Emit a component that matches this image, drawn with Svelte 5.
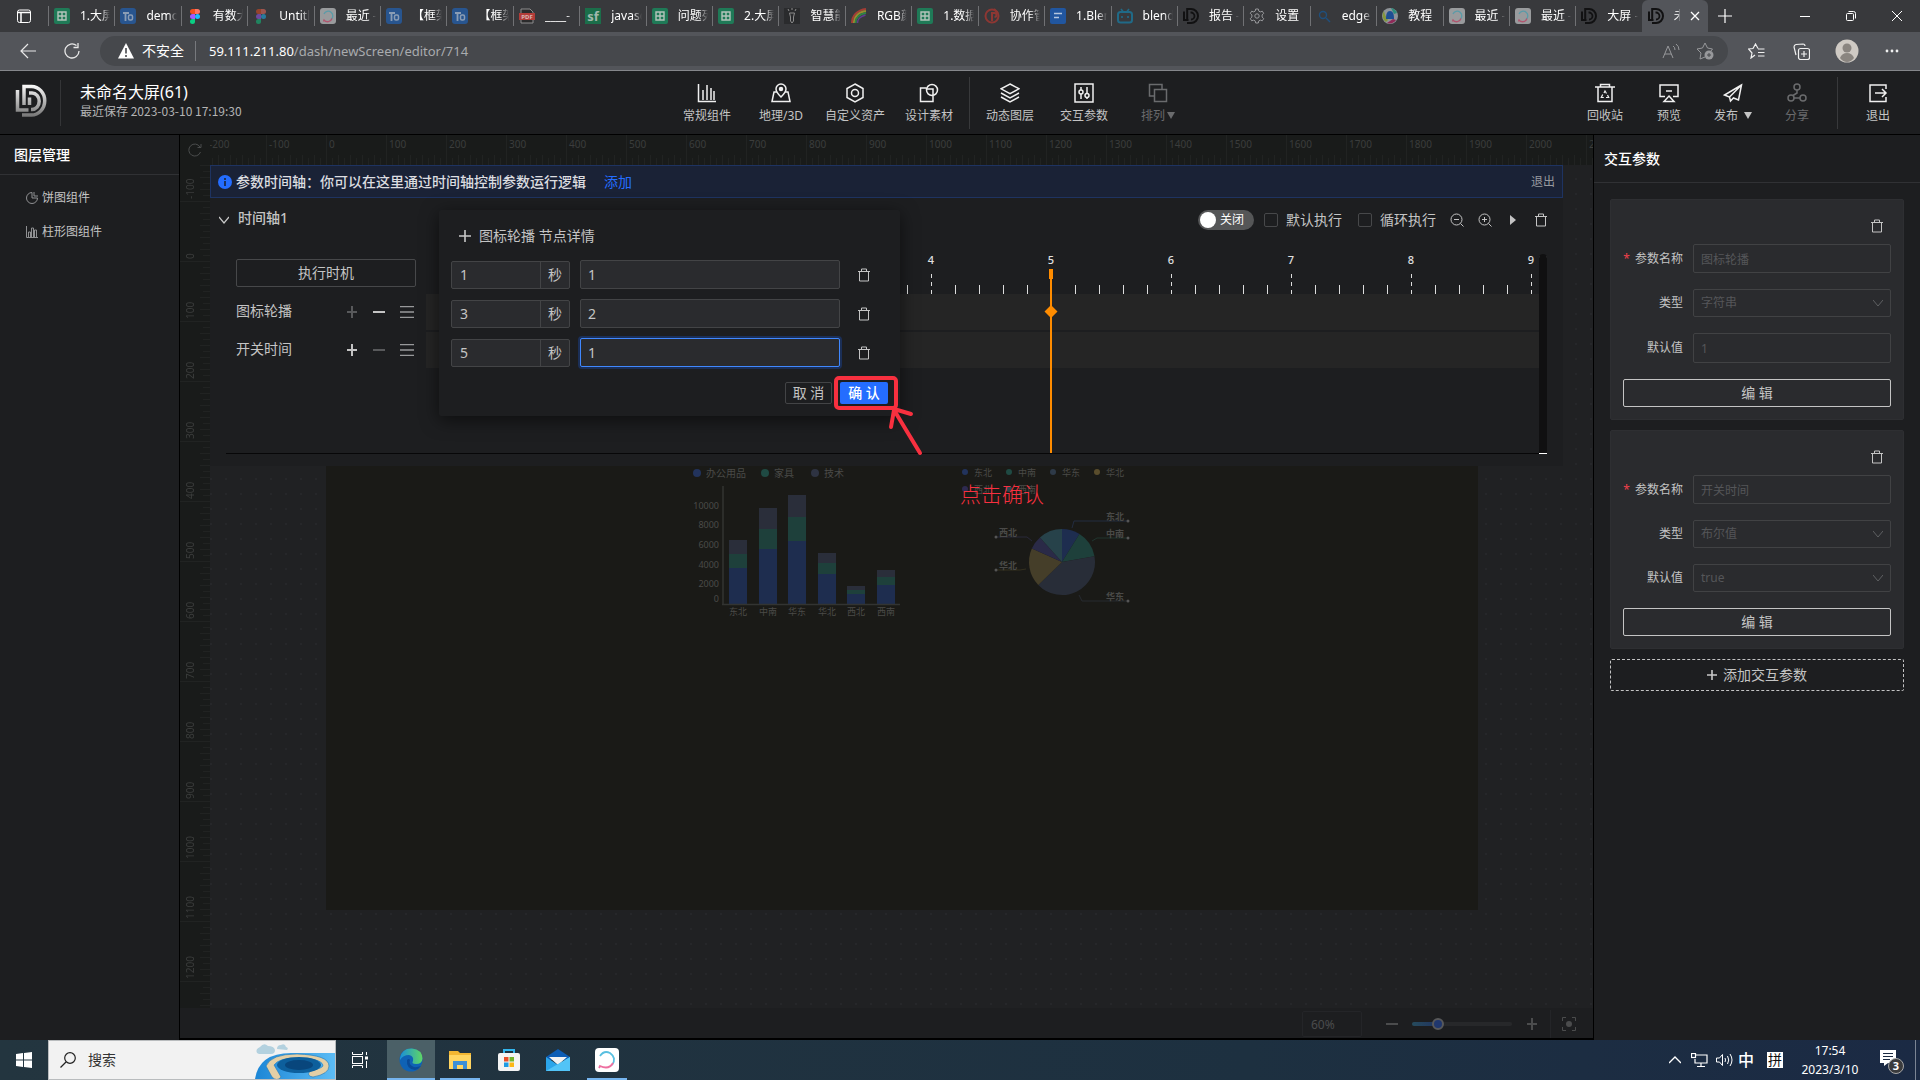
<script lang="ts">
	type Tab = { icon: string; title: string };

	const tabs: Tab[] = [
		{ icon: 'sheet', title: '1.大屏' },
		{ icon: 'to', title: 'demo' },
		{ icon: 'figma', title: '有数大' },
		{ icon: 'figmadim', title: 'Untitl' },
		{ icon: 'swirl', title: '最近 -' },
		{ icon: 'to', title: '【框架' },
		{ icon: 'to', title: '【框架' },
		{ icon: 'pdf', title: '____-' },
		{ icon: 'sf', title: 'javasc' },
		{ icon: 'sheet', title: '问题列' },
		{ icon: 'sheet', title: '2.大屏' },
		{ icon: 'bulb', title: '智慧能' },
		{ icon: 'rainbow', title: 'RGB颜' },
		{ icon: 'sheet', title: '1.数据' },
		{ icon: 'red', title: '协作管' },
		{ icon: 'doc', title: '1.Blen' },
		{ icon: 'bili', title: 'blend' },
		{ icon: 'dd', title: '报告 -' },
		{ icon: 'gear', title: '设置' },
		{ icon: 'find', title: 'edge' },
		{ icon: 'ball', title: '教程' },
		{ icon: 'swirl', title: '最近 -' },
		{ icon: 'swirl', title: '最近 -' },
		{ icon: 'dd', title: '大屏 -' }
	];

	const addTools = [
		{ icon: 'bars', label: '常规组件' },
		{ icon: 'map', label: '地理/3D' },
		{ icon: 'hex', label: '自定义资产' },
		{ icon: 'shapes', label: '设计素材' }
	];
	const dataTools = [
		{ icon: 'layers', label: '动态图层' },
		{ icon: 'sliders', label: '交互参数' },
		{ icon: 'arrange', label: '排列', caret: true, disabled: true }
	];
	const pageTools = [
		{ icon: 'recycle', label: '回收站' },
		{ icon: 'preview', label: '预览' },
		{ icon: 'send', label: '发布', caret: true },
		{ icon: 'share', label: '分享', disabled: true }
	];

	const xMarks = Array.from({ length: 24 }, (_, i) => (i - 2) * 100);
	const yMarks = Array.from({ length: 15 }, (_, i) => (i - 1) * 100);
	const seconds = Array.from({ length: 10 }, (_, i) => i);

	let nodes = $state([
		{ time: '1', value: '1' },
		{ time: '3', value: '2' },
		{ time: '5', value: '1' }
	]);
	let focused = $state(2);

	const params = [
		{ name: '图标轮播', type: '字符串', value: '1', select: false },
		{ name: '开关时间', type: '布尔值', value: 'true', select: true }
	];

	// stacked bars: top of each segment, drawn down to the axis at y 342
	const bars = [
		{ label: '东北', tops: [278, 292, 306] },
		{ label: '中南', tops: [246, 267, 287] },
		{ label: '华东', tops: [233, 255, 279] },
		{ label: '华北', tops: [291, 301, 312] },
		{ label: '西北', tops: [324, 328, 332] },
		{ label: '西南', tops: [308, 315, 323] }
	];
	const barFills = ['#2a2e3a', '#1e403b', '#1e2d4f'];
	const yLabels = [
		{ text: '10000', y: 244 },
		{ text: '8000', y: 263 },
		{ text: '6000', y: 283 },
		{ text: '4000', y: 303 },
		{ text: '2000', y: 322 },
		{ text: '0', y: 337 }
	];
	const barLegend = [
		{ text: '办公用品', x: 371, fill: '#22335c' },
		{ text: '家具', x: 439, fill: '#1f4a43' },
		{ text: '技术', x: 489, fill: '#2e3342' }
	];
	const pieLegend = [
		{ text: '东北', x: 639, y: 210, fill: '#22335c' },
		{ text: '中南', x: 683, y: 210, fill: '#1f4a43' },
		{ text: '华东', x: 727, y: 210, fill: '#2e3a48' },
		{ text: '华北', x: 771, y: 210, fill: '#5a4d2c' },
		{ text: '西北', x: 639, y: 227, fill: '#2e2a50' },
		{ text: '西南', x: 683, y: 227, fill: '#27464f' }
	];
	const slices = [
		{ from: 0, to: 32, fill: '#1e2d4f' },
		{ from: 32, to: 80, fill: '#1e403b' },
		{ from: 80, to: 226, fill: '#282d38' },
		{ from: 226, to: 294, fill: '#453e29' },
		{ from: 294, to: 318, fill: '#2a2a47' },
		{ from: 318, to: 360, fill: '#27424a' }
	];
	const pieLabels = [
		{ text: '东北', x: 780, y: 258, line: 'M746 266l2-7h54', dot: 802, dy: 259, stroke: '#222c40' },
		{ text: '中南', x: 780, y: 275, line: 'M766 279l5-3h31', dot: 802, dy: 276, stroke: '#20352f' },
		{ text: '西北', x: 673, y: 274, line: 'M706 279l-5-4h-31', dot: 670, dy: 275, stroke: '#29283a' },
		{ text: '华北', x: 673, y: 307, line: 'M700 307l-6 1h-24', dot: 670, dy: 308, stroke: '#34301f' },
		{ text: '华东', x: 780, y: 338, line: 'M753 333l3 6h46', dot: 802, dy: 339, stroke: '#272a31' }
	];

	function slicePath(from: number, to: number) {
		const r = 33;
		const at = (deg: number) => {
			const a = (deg * Math.PI) / 180;
			return `${736 + r * Math.sin(a)} ${300 - r * Math.cos(a)}`;
		};
		return `M736 300L${at(from)}A${r} ${r} 0 ${to - from > 180 ? 1 : 0} 1 ${at(to)}Z`;
	}
</script>

{#snippet favicon(name: string)}
	<svg class="fav" viewBox="0 0 16 16" fill="none" aria-hidden="true">
		{#if name === 'sheet'}
			<rect width="16" height="16" rx="2" fill="#1f7a57" />
			<path d="M4 4h8v8H4zM4 8h8M8 4v8" stroke="#b4c4bc" stroke-width="1.4" />
		{:else if name === 'to'}
			<rect width="16" height="16" rx="3" fill="#28558f" />
			<path d="M3 5h6M5.500 5v8" stroke="#8a9db5" stroke-width="1.800" />
			<rect x="8.500" y="7" width="4" height="5" rx="1.500" stroke="#8a9db5" stroke-width="1.500" />
		{:else if name === 'figma' || name === 'figmadim'}
			<g opacity={name === 'figma' ? 1 : 0.5}>
				<path d="M8 1H5.500a2.500 2.500 0 0 0 0 5H8z" fill="#f24e1e" />
				<path d="M8 1h2.500a2.500 2.500 0 0 1 0 5H8z" fill="#ff7262" />
				<path d="M8 6H5.500a2.500 2.500 0 0 0 0 5H8z" fill="#a259ff" />
				<circle cx="10.500" cy="8.500" r="2.500" fill="#1abcfe" />
				<path d="M8 11H5.500A2.500 2.500 0 1 0 8 13.500z" fill="#0acf83" />
			</g>
		{:else if name === 'swirl'}
			<rect width="16" height="16" rx="3" fill="#999b9d" />
			<path d="M4 6a4.600 4.600 0 1 1 7 5.500" stroke="#5a9ba8" stroke-width="1.300" />
			<path d="M12 10.500a4.600 4.600 0 0 1-8 1.500l-.5 1.500" stroke="#b0566f" stroke-width="1.300" />
		{:else if name === 'pdf'}
			<path d="M2 1h9l3 3v11H2z" fill="#2b2b2c" stroke="#8d8d8d" />
			<rect y="5" width="16" height="7" fill="#b23c38" />
			<text x="8" y="11" text-anchor="middle" font-size="6" font-weight="700" fill="#d9b6b4">PDF</text>
		{:else if name === 'sf'}
			<rect width="16" height="16" fill="#1b6e4a" />
			<text x="8" y="13" text-anchor="middle" font-size="13" font-weight="700" fill="#a3b8ad">sf</text>
		{:else if name === 'bulb'}
			<rect width="16" height="16" fill="#2a2b2d" />
			<path d="M5.500 5h5l-1 4v4l-1.500 2-1.500-2V9zM8 0v2M4 1l1 2M12 1l-1 2" stroke="#8c8c8c" />
		{:else if name === 'rainbow'}
			<path d="M1 15C1 8 6 2 15 1" stroke="#a33d35" stroke-width="2" />
			<path d="M3 15c0-6 4-11 12-12" stroke="#9a8a2f" stroke-width="2" />
			<path d="M4.500 15c0-5 4-9 10.500-10" stroke="#2f8446" stroke-width="2" />
			<path d="M6.500 15c0-4 2-6 8-8" stroke="#613d8f" stroke-width="1.500" />
		{:else if name === 'red'}
			<circle cx="8" cy="8" r="6.500" stroke="#8d3733" stroke-width="2" />
			<path d="M8 13V5h2.500a1.500 1.500 0 0 1 0 4M10 1l4 4" stroke="#8d3733" stroke-width="2" />
		{:else if name === 'doc'}
			<rect width="16" height="16" rx="2" fill="#21569f" />
			<path d="M4 5.500h8M4 9.500h5" stroke="#b4c6de" stroke-width="1.500" />
		{:else if name === 'bili'}
			<rect x="1" y="4" width="14" height="10.500" rx="2.500" stroke="#206a87" stroke-width="2" />
			<path d="M4 1l2 2.500M12 1l-2 2.500M5 8v2M11 8v2" stroke="#206a87" stroke-width="1.600" />
		{:else if name === 'gear'}
			<circle cx="8" cy="8" r="2.200" stroke="#98999c" />
			<path
				d="M6.700 1h2.600l.5 2.100 1.500.8 2-.7 1.400 2.200-1.600 1.500v2.200l1.600 1.500-1.400 2.200-2-.7-1.500.8-.5 2.100H6.700l-.5-2.100-1.500-.8-2 .7-1.400-2.200 1.600-1.500V6.900L1.300 5.400l1.400-2.200 2 .7 1.500-.8z"
				stroke="#98999c"
			/>
		{:else if name === 'find'}
			<circle cx="7" cy="7" r="3.500" stroke="#1f4f7c" stroke-width="1.400" />
			<path d="M10 10l4 4" stroke="#1f4f7c" stroke-width="1.400" />
		{:else if name === 'ball'}
			<circle cx="8" cy="8" r="8" fill="#8f9499" />
			<path d="M2 3a8 8 0 0 0 2 11l2-2-3-5z" fill="#84973b" />
			<path d="M9 0a8 8 0 0 1 6 5l-3 1z" fill="#2d8d7d" />
			<path d="M5 15a8 8 0 0 0 9-3l-3-1z" fill="#8f2a58" />
			<path d="M8 3c3 0 4 3 4 8H4c0-5 1-8 4-8z" fill="#1e4f93" />
		{:else if name === 'dd'}
			<path d="M1 3.500v8.500h4.500M4.200 12V1H8a7 7 0 0 1 0 14H4" stroke="#111112" stroke-width="2" />
			<path d="M7.500 4.500H8a3.500 3.500 0 0 1 0 7" stroke="#111112" stroke-width="1.800" />
		{/if}
	</svg>
{/snippet}

{#snippet toolIcon(name: string)}
	<svg class="tool-icon" viewBox="0 0 20 20" fill="none" stroke="currentColor" stroke-width="1.500" aria-hidden="true">
		{#if name === 'bars'}
			<path d="M1.500 1v17.500H19M6 17V7M10 17V2M14 17V5M17 17V8" />
		{:else if name === 'map'}
			<path d="M6 9H3L1 18.500h18L17 9h-3M10 14C7 11 5 8.500 5 6a5 5 0 0 1 10 0c0 2.500-2 5-5 8z" />
			<circle cx="10" cy="6" r="1.500" fill="currentColor" />
		{:else if name === 'hex'}
			<path d="M10 1l8 4.500v9L10 19l-8-4.500v-9z" />
			<circle cx="10" cy="10" r="3.500" />
		{:else if name === 'shapes'}
			<path d="M7 5H1.500v13.500H14V13" />
			<circle cx="13" cy="7" r="5.500" />
			<path d="M8 6h6v6" />
		{:else if name === 'layers'}
			<path d="M10 1l9 4.800-9 4.800-9-4.800zM1 10l9 4.800 9-4.800M1 14l9 4.800 9-4.800" />
		{:else if name === 'sliders'}
			<rect x="1" y="1" width="18" height="18" />
			<path d="M7 4v3M7 11v5M13 4v7M13 15v1" />
			<circle cx="7" cy="9" r="2" />
			<circle cx="13" cy="12.500" r="2" />
		{:else if name === 'arrange'}
			<path d="M6 13H1.500V1.500H14V6" />
			<rect x="6.500" y="6.500" width="12" height="12" />
		{:else if name === 'recycle'}
			<path d="M0 4h20M5.500 4V1.500h9V4M3 4v14.500h14V4" />
			<path d="M9 10l1-2 1.500 2.500M12.500 12l1.200 2.500H11M8.800 14.500H6.300l1.400-3" stroke-width="1.200" />
		{:else if name === 'preview'}
			<path d="M6 13.500H1V2h18v11.500h-5M7 8h6M10 13l5 5.500H5z" />
		{:else if name === 'send'}
			<path d="M18.500 2L1.500 12l5 2 1 4 3-3 5 2zM6.500 14l12-12" />
		{:else if name === 'share'}
			<circle cx="10" cy="4" r="3" />
			<circle cx="4" cy="15" r="3" />
			<circle cx="16" cy="15" r="3" />
			<path d="M10 7v3l-4 2.500M7 15h6" />
		{:else if name === 'exit'}
			<path d="M18 6V2H2v16.500h16V14M7 10h11M14 6l4 4-4 4" />
		{/if}
	</svg>
{/snippet}

{#snippet trash()}
	<svg class="glyph" viewBox="0 0 14 14" fill="none" stroke="currentColor" aria-hidden="true">
		<path d="M1 3.500h12M4.500 3V1h5v2M2.500 4v9h9V4" />
	</svg>
{/snippet}

{#snippet tool(t: { icon: string; label: string; caret?: boolean; disabled?: boolean })}
	<button class="tool" disabled={t.disabled}>
		{@render toolIcon(t.icon)}
		<span class="tool-label">{t.label}{#if t.caret}<i class="caret"></i>{/if}</span>
	</button>
{/snippet}

<div class="page">
	<nav class="tabstrip" aria-label="标签页">
		<button class="tab-menu" aria-label="标签操作菜单">
			<svg width="14" height="14" viewBox="0 0 14 14" fill="none" stroke="#fff">
				<rect x=".5" y="1" width="13" height="12.500" rx="2" />
				<path d="M1 3.500h12M4 4v9" stroke-width="1.500" />
			</svg>
		</button>
		<div class="tabs">
			{#each tabs as tab}
				<button class="tab">
					{@render favicon(tab.icon)}
					<span class="tab-title">{tab.title}</span>
				</button>
			{/each}
			<button class="tab active">
				{@render favicon('dd')}
				<span class="tab-title short">未命</span>
				<svg class="tab-close" viewBox="0 0 10 10" stroke="#fff" stroke-width="1.300"><path d="M1 1l8 8M9 1L1 9" /></svg>
			</button>
		</div>
		<button class="new-tab" aria-label="新建标签页">
			<svg width="14" height="14" viewBox="0 0 14 14" stroke="#fff" stroke-width="1.200"><path d="M7 0v14M0 7h14" /></svg>
		</button>
		<div class="win">
			<button aria-label="最小化"><svg width="10" height="10" viewBox="0 0 10 10" stroke="#fff"><path d="M0 5.500h10" /></svg></button>
			<button aria-label="还原">
				<svg width="10" height="10" viewBox="0 0 10 10" fill="none" stroke="#fff">
					<rect x=".5" y="2.500" width="7" height="7" rx="1" />
					<path d="M2.500.5h5a2 2 0 0 1 2 2v5" />
				</svg>
			</button>
			<button aria-label="关闭"><svg width="10" height="10" viewBox="0 0 10 10" stroke="#fff"><path d="M0 0l10 10M10 0L0 10" /></svg></button>
		</div>
	</nav>

	<div class="browser">
		<button aria-label="返回">
			<svg width="16" height="16" viewBox="0 0 16 16" fill="none" stroke="#e8e8e8" stroke-width="1.200"><path d="M16 8H1M8 1L1 8l7 7" /></svg>
		</button>
		<button aria-label="刷新">
			<svg width="16" height="16" viewBox="0 0 16 16" fill="none" stroke="#e8e8e8" stroke-width="1.300">
				<path d="M15 8A7 7 0 1 1 12.500 2.600M14 0v4.500H9.500" />
			</svg>
		</button>
		<div class="address">
			<svg width="16" height="16" viewBox="0 0 16 16"><path d="M8 0l8 15.500H0z" fill="#fff" /><path d="M8 5v5.500M8 12v2" stroke="#46484c" stroke-width="1.600" /></svg>
			<span class="unsafe">不安全</span>
			<span class="url">59.111.211.80<span>/dash/newScreen/editor/714</span></span>
			<svg width="18" height="16" viewBox="0 0 18 16" fill="none" stroke="#97989b"><path d="M1 15L6 3l5 12M3 11h6M11 3q2 1 2 4M14 1q3 2 3 6" /></svg>
			<svg width="18" height="18" viewBox="0 0 18 18" fill="none" stroke="#97989b">
				<path d="M9 15l-5 2 1-6-4-4 5.500-1L9 1l2.500 5 5 1-1.500 2" />
				<circle cx="13" cy="13" r="4.500" fill="#97989b" stroke="none" />
				<path d="M13 11v4M11 13h4" stroke="#46484c" />
			</svg>
		</div>
		<button aria-label="收藏夹">
			<svg width="17" height="16" viewBox="0 0 17 16" fill="none" stroke="#f0f0f0" stroke-width="1.200"><path d="M7 12l-4 3 1-5-3.500-4L5 5.500 7.500 1 10 5.500M10 6h6.500M10 9.500h6.500M10 13h6.500" /></svg>
		</button>
		<button aria-label="集锦">
			<svg width="17" height="17" viewBox="0 0 17 17" fill="none" stroke="#f0f0f0" stroke-width="1.200"><rect x="5.500" y="5.500" width="11" height="11" rx="2" /><path d="M3 12L1 4q0-2 2-2.500L10 1q2 0 2 2M11 8v6M8 11h6" /></svg>
		</button>
		<button aria-label="个人资料">
			<svg width="24" height="24" viewBox="0 0 24 24"><circle cx="12" cy="12" r="11.500" fill="#cfcac4" /><circle cx="12" cy="9" r="4.500" fill="#8a8580" /><path d="M5 19q2-5 7-5t7 5q-3 4-7 4t-7-4z" fill="#8a8580" /></svg>
		</button>
		<button aria-label="更多">
			<svg width="14" height="4" viewBox="0 0 14 4" fill="#f0f0f0"><circle cx="2" cy="2" r="1.400" /><circle cx="7" cy="2" r="1.400" /><circle cx="12" cy="2" r="1.400" /></svg>
		</button>
	</div>

	<header class="head">
		<div class="brand">
			<svg class="logo" viewBox="0 0 32 34" fill="none" stroke="url(#logoFill)" stroke-width="3.500">
				<defs>
					<linearGradient id="logoFill" x1="0" y1="0" x2="0" y2="34" gradientUnits="userSpaceOnUse">
						<stop offset="0" stop-color="#fff" />
						<stop offset="1" stop-color="#6f6f6f" />
					</linearGradient>
				</defs>
				<path d="M2.500 6v20h11M9 21V2.500h7.500a13 14 0 0 1 0 28.500H7" />
				<path d="M14.500 21v-7.500M14 9h3a7 8 0 0 1 0 16.500h-1" />
			</svg>
			<div class="brand-text">
				<h1>未命名大屏(61)</h1>
				<p>最近保存 2023-03-10 17:19:30</p>
			</div>
		</div>
		<div class="tools">
			{#each addTools as t}{@render tool(t)}{/each}
			<span class="rule"></span>
			{#each dataTools as t}{@render tool(t)}{/each}
		</div>
		<div class="tools end">
			{#each pageTools as t}{@render tool(t)}{/each}
			<span class="rule"></span>
			{@render tool({ icon: 'exit', label: '退出' })}
		</div>
	</header>

	<main class="body">
		<aside class="layers">
			<h2>图层管理</h2>
			<ul>
				<li>
					<svg width="12" height="12" viewBox="0 0 12 12" fill="none" stroke="#8f9092"><path d="M6 .5A5.500 5.500 0 1 0 11.500 6H6zM8 0v4h4" /></svg>
					饼图组件
				</li>
				<li>
					<svg width="12" height="12" viewBox="0 0 12 12" fill="none" stroke="#8f9092"><path d="M.5 0v11.500H12M2.500 11V6h2v5M5.500 11V2h2v9M8.500 11V4h2v7" /></svg>
					柱形图组件
				</li>
			</ul>
		</aside>

		<section class="stage">
			<div class="corner">
				<svg width="14" height="14" viewBox="0 0 14 14" fill="none" stroke="#4a4c4c"><path d="M12.500 9A6 6 0 1 1 12 4M13 1v3.500H9.500" /></svg>
			</div>
			<div class="ruler-x">
				{#each xMarks as m}<span>{m}</span>{/each}
			</div>
			<div class="ruler-y">
				{#each yMarks as m}<span>{m}</span>{/each}
			</div>

			<div class="workspace">
				<svg class="canvas" width="1152" height="648" viewBox="0 0 1152 648">
					<g class="chart-text">
						{#each barLegend as l}
							<circle cx={l.x} cy="211" r="4" fill={l.fill} />
							<text class="big" x={l.x + 9} y="215">{l.text}</text>
						{/each}
						{#each yLabels as l}
							<text x="393" y={l.y + 3} text-anchor="end">{l.text}</text>
						{/each}
						{#each bars as bar, i}
							{#each bar.tops as top, k}
								<rect x={403 + Math.round(i * 29.6)} y={top} width="18" height={342 - top} fill={barFills[k]} />
							{/each}
							<text x={412 + Math.round(i * 29.6)} y="353" text-anchor="middle">{bar.label}</text>
						{/each}
						<path d="M397 224v118M396 342.500h178" stroke="#333432" stroke-width="1.500" />

						{#each pieLegend as l}
							<circle cx={l.x} cy={l.y} r="3" fill={l.fill} />
							<text x={l.x + 9} y={l.y + 4}>{l.text}</text>
						{/each}
						{#each slices as s}
							<path d={slicePath(s.from, s.to)} fill={s.fill} />
						{/each}
						{#each pieLabels as l}
							<path d={l.line} fill="none" stroke={l.stroke} />
							<circle cx={l.dot} cy={l.dy} r="1.500" fill="#555" />
							<text class="strong" x={l.x} y={l.y}>{l.text}</text>
						{/each}
					</g>
				</svg>

				<div class="timeline">
					<div class="banner">
						<svg width="14" height="14" viewBox="0 0 14 14"><circle cx="7" cy="7" r="7" fill="#246dff" /><path d="M7 3v2M7 6v5" stroke="#1a2236" stroke-width="1.600" /></svg>
						<strong>参数时间轴：你可以在这里通过时间轴控制参数运行逻辑</strong>
						<button class="link">添加</button>
						<button class="leave">退出</button>
					</div>

					<div class="tl-head">
						<svg width="10" height="8" viewBox="0 0 10 8" fill="none" stroke="#c8c8c8" stroke-width="1.200"><path d="M0 1l5 6 5-6" /></svg>
						<strong>时间轴1</strong>
						<button class="switch" role="switch" aria-checked="false"><i></i>关闭</button>
						<label><input type="checkbox" />默认执行</label>
						<label><input type="checkbox" />循环执行</label>
						<button aria-label="缩小">
							<svg class="glyph" viewBox="0 0 14 14" fill="none" stroke="currentColor"><circle cx="6.500" cy="6.500" r="5.500" /><path d="M10.500 10.500l3 3M4 6.500h5" /></svg>
						</button>
						<button aria-label="放大">
							<svg class="glyph" viewBox="0 0 14 14" fill="none" stroke="currentColor"><circle cx="6.500" cy="6.500" r="5.500" /><path d="M10.500 10.500l3 3M4 6.500h5M6.500 4v5" /></svg>
						</button>
						<button aria-label="播放"><svg class="glyph" viewBox="0 0 14 14" fill="currentColor"><path d="M4 2l6 5-6 5z" /></svg></button>
						<button aria-label="删除时间轴">{@render trash()}</button>
					</div>

					<div class="tl-body">
						<div class="tl-side">
							<button class="moment">执行时机</button>
							{#each ['图标轮播', '开关时间'] as name, i}
								<div class="tl-row">
									<span>{name}</span>
									<button class:off={i === 0} aria-label="添加节点"><svg width="12" height="12" viewBox="0 0 12 12" stroke="currentColor" stroke-width="2"><path d="M6 0v12M1 6h10" /></svg></button>
									<button class:off={i === 1} aria-label="移除节点"><svg width="12" height="12" viewBox="0 0 12 12" stroke="currentColor" stroke-width="2"><path d="M0 6h12" /></svg></button>
									<button class="menu" aria-label="更多操作"><svg width="14" height="12" viewBox="0 0 14 12" stroke="currentColor"><path d="M0 .5h14M0 6h14M0 11.500h14" stroke-width="1.400" /></svg></button>
								</div>
							{/each}
						</div>
						<div class="tracks">
							<div class="scale">
								{#each seconds as s}<div class="sec"><span>{s}</span></div>{/each}
							</div>
							<div class="track"></div>
							<div class="track"></div>
							<svg class="playhead" width="14" height="184" viewBox="0 0 14 184" fill="#ff8c00">
								<path d="M5 0h4v10H5zM6 10h2v174H6zM7 36l6.500 6.500L7 49 .5 42.500z" />
							</svg>
						</div>
						<div class="scroll"></div>
					</div>

					<div class="popover" role="dialog" aria-label="节点详情">
						<div class="pop-title">
							<svg width="12" height="12" viewBox="0 0 12 12" stroke="#c8c8c8" stroke-width="1.600"><path d="M6 0v12M0 6h12" /></svg>
							图标轮播 节点详情
						</div>
						{#each nodes as node, i}
							<div class="pop-row">
								<div class="time">
									<input aria-label="时间" bind:value={node.time} />
									<span>秒</span>
								</div>
								<input class="val" class:focus={focused === i} aria-label="值" bind:value={node.value} onfocus={() => (focused = i)} />
								<button aria-label="删除节点">{@render trash()}</button>
							</div>
						{/each}
						<div class="pop-foot">
							<button class="cancel">取 消</button>
							<button class="ok">确 认</button>
						</div>
						<svg class="mark" width="92" height="84" viewBox="0 0 92 84" fill="none" stroke="#f8303f" stroke-width="4" stroke-linecap="round">
							<rect x="2" y="2" width="60" height="30" rx="3" />
							<path d="M86 77L60 34M57 51L60 34M60 33l17 5" />
						</svg>
					</div>
				</div>
				<p class="note">点击确认</p>
			</div>

			<div class="zoombar">
				<input class="percent" aria-label="缩放比例" value="60%" />
				<button aria-label="缩小画布"><svg width="12" height="12" viewBox="0 0 12 12" stroke="#4b4c4d" stroke-width="2"><path d="M0 6h12" /></svg></button>
				<input type="range" aria-label="缩放" min="0" max="100" value="23" />
				<button aria-label="放大画布"><svg width="12" height="12" viewBox="0 0 12 12" stroke="#4b4c4d" stroke-width="2"><path d="M6 0v12M1 6h10" /></svg></button>
				<button class="fit" aria-label="适应画布">
					<svg width="14" height="14" viewBox="0 0 14 14" fill="none" stroke="#4b4c4d"><path d="M.5 4V.5H4M10 .5h3.500V4M13.500 10v3.500H10M4 13.500H.5V10" /><circle cx="7" cy="7" r="3" fill="#4b4c4d" stroke="none" /></svg>
				</button>
			</div>
		</section>

		<aside class="params">
			<h2>交互参数</h2>
			<div class="param-list">
				{#each params as p, i}
					<form class="card">
						<button type="button" class="del" aria-label="删除参数">{@render trash()}</button>
						<label for="name{i}"><em>*</em>参数名称</label>
						<input id="name{i}" value={p.name} disabled />
						<label for="type{i}">类型</label>
						<div class="select">
							<select id="type{i}" disabled><option>{p.type}</option></select>
							<svg width="10" height="8" viewBox="0 0 10 8"><path d="M0 1l5 6 5-6" /></svg>
						</div>
						<label for="value{i}">默认值</label>
						{#if p.select}
							<div class="select">
								<select id="value{i}" disabled><option>{p.value}</option></select>
								<svg width="10" height="8" viewBox="0 0 10 8"><path d="M0 1l5 6 5-6" /></svg>
							</div>
						{:else}
							<input id="value{i}" class="num" value={p.value} disabled />
						{/if}
						<button type="button" class="edit">编 辑</button>
					</form>
				{/each}
				<button class="add-param">
					<svg width="10" height="12" viewBox="0 0 10 12" stroke="#c8c8c8" stroke-width="1.600"><path d="M5 1v10M0 6h10" /></svg>
					添加交互参数
				</button>
			</div>
		</aside>
	</main>

	<footer class="taskbar">
		<button class="start" aria-label="开始">
			<svg width="16" height="16" viewBox="0 0 16 16" fill="#fff"><path d="M0 2l7-1v6.500H0zM8 1l8-1v7.500H8zM0 8.500h7V15l-7-1zM8 8.500h8V16l-8-1z" /></svg>
		</button>
		<label class="search">
			<svg width="16" height="16" viewBox="0 0 16 16" fill="none" stroke="#222" stroke-width="1.200"><circle cx="10" cy="6" r="5.300" /><path d="M6 10l-5.500 5.500" /></svg>
			<input aria-label="搜索" placeholder="搜索" />
			<svg width="80" height="38" viewBox="0 0 80 38">
				<defs>
					<linearGradient id="sea" x1="0" x2="1"><stop offset="0" stop-color="#1c86d6" /><stop offset="1" stop-color="#5cbcf5" /></linearGradient>
				</defs>
				<path d="M2 12q-2-4 3-6 4-5 8-1 6 0 7 4 0 4-4 4H4zM22 8q0-4 4-4 4-2 5 2 3 1 1 3z" fill="#b3d1df" />
				<path d="M0 38Q4 12 36 12h44v26z" fill="url(#sea)" />
				<path d="M11 25q5-12 31-12 32 1 32 12 0 8-16 11-7-1-3-6 14-3 13-6-2-7-27-7-17 0-22 7l7 12q-4 5-9 0z" fill="#e3cfa6" stroke="#1c77b8" stroke-width=".6" />
				<ellipse cx="44" cy="24" rx="22" ry="8" fill="#0d5f9c" />
				<ellipse cx="44" cy="24" rx="14" ry="5" fill="#08467c" />
			</svg>
		</label>
		<button class="task view" aria-label="任务视图">
			<svg width="16" height="16" viewBox="0 0 16 16" fill="none" stroke="#fff"><path d="M.5 0v2.500h10V0M.5 16v-2.500h10V16M14.500 0v3M14.500 9v7" /><rect x=".5" y="4.500" width="10" height="7" /><rect x="13" y="4.500" width="3" height="3" fill="#fff" stroke="none" /></svg>
		</button>
		<button class="task on run" aria-label="Edge">
			<svg width="24" height="24" viewBox="0 0 24 24">
				<defs>
					<linearGradient id="edgeTop" x1="0" x2="1"><stop offset="0" stop-color="#1a8fd8" /><stop offset="1" stop-color="#5fd765" /></linearGradient>
				</defs>
				<circle cx="12" cy="12" r="11.500" fill="#0f62b5" />
				<path d="M1 10Q3 0 13 .5q10 1 10.500 10Q23 16 17 16q-5 0-3-3 1-5-4-6-6 0-9 5z" fill="url(#edgeTop)" />
				<path d="M8 12q-1 9 8 10 4-1 6-4-8 3-11-2-1-2 0-4-1-2-3 0z" fill="#0a4a97" />
			</svg>
		</button>
		<button class="task run" aria-label="文件资源管理器">
			<svg width="24" height="24" viewBox="0 0 24 24"><path d="M1 3h9l2 2h11v16H1z" fill="#f2b632" /><path d="M1 7h22v14H1z" fill="#ffd561" /><path d="M5 21v-8h14v8h-4v-4H9v4z" fill="#3c8fd6" /></svg>
		</button>
		<button class="task" aria-label="应用商店">
			<svg width="24" height="24" viewBox="0 0 24 24"><path d="M7 6V2h10v4" fill="none" stroke="#32b6ee" stroke-width="2" /><rect x="1" y="5" width="22" height="18" rx="2" fill="#f4f4f4" /><path d="M7 9h4.500v4.500H7z" fill="#e8502a" /><path d="M12.500 9H17v4.500h-4.500z" fill="#74b52c" /><path d="M7 14.500h4.500V19H7z" fill="#1f9be3" /><path d="M12.500 14.500H17V19h-4.500z" fill="#fcb714" /></svg>
		</button>
		<button class="task" aria-label="邮件">
			<svg width="24" height="24" viewBox="0 0 24 24"><path d="M0 9L12 1l12 8v3H0z" fill="#0d5db5" /><path d="M3 9h18l-9 8z" fill="#f2f2f2" /><path d="M0 9l12 8 12-8v14H0z" fill="#2ba5ea" /><path d="M0 23L24 9v14z" fill="#52c4f7" /></svg>
		</button>
		<button class="task run" aria-label="有数">
			<svg width="24" height="24" viewBox="0 0 24 24" fill="none" stroke-width="1.800"><rect width="24" height="24" rx="4" fill="#fff" /><path d="M5 8q4-6 10-3 7 5 2 12" stroke="#58bfe0" /><path d="M18 15q-4 7-13 3l-1 2" stroke="#ee6fa0" /></svg>
		</button>
		<div class="tray">
			<svg width="12" height="8" viewBox="0 0 12 8" fill="none" stroke="#fff" stroke-width="1.400"><path d="M0 7l6-6 6 6" /></svg>
			<svg width="17" height="14" viewBox="0 0 17 14" fill="none" stroke="#fff" stroke-width="1.200"><path d="M5 2h11v8H4V6M10 10v3M6 13.500h8" /><rect x=".5" y=".5" width="4" height="4" /></svg>
			<svg width="17" height="14" viewBox="0 0 17 14" fill="none" stroke="#fff"><path d="M.5 5v4h3l3 3.500v-11L3.500 5zM9 5q1 2 0 4M11.500 3q2.500 4 0 8M14 1q4 6 0 12" /></svg>
			<span class="ime">中</span>
			<span class="pin">拼</span>
			<time>17:54<br />2023/3/10</time>
			<button class="notice" aria-label="通知">
				<svg width="24" height="26" viewBox="0 0 24 26"><path d="M0 1h16v13H8l-4 3v-3H0z" fill="#fff" /><path d="M3 4.500h10M3 7.500h10M3 10.500h7" stroke="#1b2a42" /><circle cx="16" cy="17" r="7.500" fill="#3a3b3d" stroke="#a8a8a8" /><text x="16" y="21" text-anchor="middle" font-size="11" font-weight="700" fill="#fff">3</text></svg>
			</button>
		</div>
	</footer>
</div>

<style>
	:global(body) {
		background: #1d1e20;
	}

	.page {
		display: flex;
		flex-direction: column;
		min-height: 100vh;
		font-family: 'Noto Sans', 'Noto Sans CJK SC', sans-serif;
		font-size: 14px;
		line-height: 20px;
		color: #c4c4c4;
		background: #1d1e20;
		overflow: hidden;
	}

	.page :is(button, input, select) {
		box-sizing: border-box;
		margin: 0;
		padding: 0;
		border: 0;
		background: none;
		color: inherit;
		font: inherit;
		outline: 0;
	}

	.page :is(h1, h2, p, ul) {
		margin: 0;
		padding: 0;
	}

	svg {
		display: block;
		flex: none;
	}

	.glyph {
		width: 14px;
		height: 14px;
	}

	/* browser chrome */
	.tabstrip {
		display: flex;
		height: 32px;
		background: #38393c;
	}

	.tab-menu {
		display: flex;
		align-items: center;
		width: 48px;
		padding-left: 17px !important;
	}

	.tabs {
		display: flex;
		flex: 1;
		min-width: 0;
	}

	.tab {
		display: flex;
		flex: 1 1 0;
		align-items: center;
		gap: 10px;
		min-width: 0;
		padding: 0 4px 0 6px !important;
		background: linear-gradient(#707174, #707174) 0 50% / 1px 20px no-repeat !important;
	}

	.fav {
		width: 16px;
		height: 16px;
	}

	.tab-title {
		flex: 1;
		min-width: 0;
		overflow: hidden;
		font-size: 12px;
		text-align: left;
		white-space: nowrap;
		color: #fff;
		mask-image: linear-gradient(90deg, #000 70%, transparent);
	}

	.tab.active {
		background: #53555a !important;
		border-radius: 6px 6px 0 0;
	}

	.tab-title.short {
		flex: 0 0 6px;
	}

	.tab-close {
		width: 10px;
		height: 10px;
	}

	.new-tab,
	.win button {
		display: flex;
		align-items: center;
		justify-content: center;
	}

	.new-tab {
		width: 34px;
	}

	.win {
		display: flex;
		padding-left: 40px;
	}

	.win button {
		width: 46px;
	}

	.browser {
		display: flex;
		align-items: center;
		height: 38px;
		padding: 0 6px 0 20px;
		background: #53555a;
		border-bottom: 1px solid #85878b;
	}

	.browser > button:nth-child(-n + 2) {
		display: flex;
		width: 44px;
	}

	.browser > button:nth-child(2) {
		width: 36px;
	}

	.browser > .address ~ button {
		display: flex;
		justify-content: center;
		width: 45px;
	}

	.address {
		display: flex;
		flex: 1;
		align-items: center;
		gap: 16px;
		box-sizing: border-box;
		height: 30px;
		margin-right: 6px;
		padding: 0 14px 0 18px;
		border-radius: 15px;
		background: #46484c;
	}

	.unsafe {
		margin-left: -8px;
		padding-right: 11px;
		border-right: 1px solid #77797d;
		color: #fff;
	}

	.url {
		flex: 1;
		margin-left: -3px;
		font-size: 13px;
		color: #fff;
	}

	.url span {
		color: #a9abae;
	}

	/* editor header */
	.head {
		display: flex;
		justify-content: space-between;
		align-items: center;
		height: 63px;
		border-bottom: 1px solid #000;
	}

	.brand {
		display: flex;
		align-items: center;
		box-sizing: border-box;
		min-width: 292px;
		padding-left: 15px;
	}

	.logo {
		width: 32px;
		height: 34px;
		margin-bottom: 4px;
	}

	.brand-text {
		margin-left: 13px;
		padding-left: 19px;
		border-left: 1px solid #343537;
	}

	.brand-text h1 {
		font-size: 16px;
		font-weight: 400;
		line-height: 24px;
		color: #fff;
	}

	.brand-text p {
		padding-bottom: 8px;
		font-family: 'Noto Sans CJK SC', sans-serif;
		font-size: 12px;
		line-height: 14px;
		color: #b4b4b5;
	}

	.tools {
		display: flex;
		align-items: center;
	}

	.tool {
		display: flex;
		flex-direction: column;
		align-items: center;
		gap: 3px;
		width: 74px;
		padding-top: 4px !important;
	}

	.end .tool {
		width: 64px;
	}

	.end {
		padding-right: 10px;
	}

	.tool-icon {
		width: 20px;
		height: 20px;
		color: #f0f0f0;
	}

	.tool-label {
		font-size: 12px;
		line-height: 20px;
		white-space: nowrap;
	}

	.tool:disabled,
	.tool:disabled .tool-icon {
		color: #6a6b6d;
	}

	.caret {
		display: inline-block;
		margin-left: 2px;
		border: 4px solid transparent;
		border-top: 7px solid currentColor;
		border-bottom: 0;
		vertical-align: 1px;
	}

	.end .caret {
		margin-left: 6px;
	}

	.rule {
		width: 1px;
		height: 52px;
		margin: 0 3px;
		background: #38393b;
	}

	.end .rule {
		margin: 0 8px;
	}

	/* editor body */
	.body {
		display: flex;
		flex: 1;
		min-height: 0;
	}

	h2 {
		font-size: 14px;
		font-weight: 500;
		color: #fff;
	}

	.layers {
		box-sizing: border-box;
		width: 180px;
		border-right: 1px solid #000;
	}

	.layers h2 {
		padding: 10px 14px 9px;
		border-bottom: 1px solid #303134;
	}

	.layers ul {
		padding-top: 6px;
		list-style: none;
	}

	.layers li {
		display: flex;
		align-items: center;
		gap: 4px;
		height: 34px;
		padding-left: 26px;
		font-size: 12px;
	}

	.stage {
		display: grid;
		flex: 1;
		grid-template: 30px 1fr 30px / 30px minmax(0, 1fr);
		min-width: 0;
		border-bottom: 2px solid #000;
	}

	.corner,
	.ruler-x,
	.ruler-y {
		background: #191b1a;
	}

	.corner {
		display: grid;
		place-items: center;
	}

	.ruler-x,
	.ruler-y {
		display: flex;
		overflow: hidden;
		font-size: 10px;
		color: #3b3d3c;
	}

	.ruler-x span {
		flex: 0 0 60px;
		box-sizing: border-box;
		padding-left: 3px;
		line-height: 18px;
		background:
			linear-gradient(#212322, #212322) 0 0 / 1px 100% no-repeat,
			repeating-linear-gradient(90deg, #212322 0 1px, transparent 1px 12px) 0 100% / 100% 10px no-repeat,
			repeating-linear-gradient(90deg, #212322 0 1px, transparent 1px 6px) 0 100% / 100% 7px no-repeat;
	}

	.ruler-x span:first-child {
		margin-left: -4px;
	}

	.ruler-y {
		flex-direction: column;
		height: 0;
		min-height: 100%;
	}

	.ruler-y span {
		flex: 0 0 60px;
		box-sizing: border-box;
		width: 30px;
		padding-top: 3px;
		padding-right: 1px;
		line-height: 18px;
		writing-mode: vertical-rl;
		transform: rotate(180deg);
		background:
			linear-gradient(#212322, #212322) 0 0 / 100% 1px no-repeat,
			repeating-linear-gradient(#212322 0 1px, transparent 1px 12px) 0 0 / 10px 100% no-repeat,
			repeating-linear-gradient(#212322 0 1px, transparent 1px 6px) 0 0 / 7px 100% no-repeat;
	}

	.ruler-y span:first-child {
		margin-top: -23px;
	}

	.workspace {
		position: relative;
		overflow: hidden;
		background: #202123 radial-gradient(circle at 1px 1px, #26272a 1px, transparent 1px) 0 13px / 15px 15px;
	}

	.canvas {
		position: absolute;
		left: 116px;
		top: 97px;
		background: #1a1a17;
	}

	.chart-text {
		font-size: 9px;
		fill: #4a4a48;
	}

	.chart-text .big {
		font-size: 10px;
	}

	.chart-text .strong {
		font-weight: 700;
	}

	.timeline {
		position: relative;
		margin-right: 30px;
		padding-bottom: 12px;
		background: #1d1e20;
	}

	.banner {
		display: flex;
		align-items: center;
		box-sizing: border-box;
		height: 33px;
		padding: 0 7px;
		border: 1px solid #1e3361;
		background: #1a2236;
	}

	.banner strong {
		margin: 0 18px 0 4px;
		font-weight: 500;
		color: #dcdde0;
	}

	.banner .link {
		color: #246dff;
	}

	.banner .leave {
		margin-left: auto;
		font-size: 12px;
		line-height: 24px;
		color: #97999f;
	}

	.tl-head {
		display: flex;
		align-items: center;
		height: 44px;
		padding: 0 15px 0 9px;
	}

	.tl-head strong {
		margin: 0 auto 0 9px;
		font-weight: 500;
		line-height: 24px;
		padding-bottom: 4px;
	}

	.tl-head button {
		margin-left: 14px;
	}

	.tl-head label {
		display: flex;
		align-items: center;
		gap: 8px;
		margin-left: 10px;
	}

	.tl-head label + label {
		margin-left: 16px;
	}

	.tl-head input {
		width: 14px;
		height: 14px;
		border: 1px solid #47484a;
		border-radius: 2px;
		appearance: none;
	}

	.tl-head .switch {
		display: flex;
		align-items: center;
		gap: 4px;
		width: 56px;
		height: 20px;
		padding-left: 2px;
		border-radius: 10px;
		background: #555657;
		font-size: 12px;
		color: #fff;
	}

	.switch i {
		width: 16px;
		height: 16px;
		border-radius: 50%;
		background: #fff;
	}

	.tl-body {
		display: flex;
		height: 211px;
		margin: 0 16px;
		border-bottom: 1px solid #070708;
	}

	.tl-side {
		box-sizing: border-box;
		width: 200px;
		padding: 17px 10px 0;
	}

	.moment {
		width: 100%;
		height: 28px;
		margin-bottom: 7px !important;
		border: 1px solid #47484a !important;
		border-radius: 2px;
	}

	.tl-row {
		display: flex;
		align-items: center;
		height: 36px;
		margin-bottom: 2px;
	}

	.tl-row span {
		flex: 1;
		padding-bottom: 3px;
	}

	.tl-row button {
		margin-left: 15px;
	}

	.tl-row .menu {
		margin: 0 2px 0 15px;
		color: #98999a;
	}

	.tl-row .off {
		color: #58595b;
	}

	.tracks {
		position: relative;
		flex: 1;
		min-width: 0;
		overflow: hidden;
	}

	.scale {
		display: flex;
		height: 52px;
		padding-left: 25px;
	}

	.sec {
		flex: 0 0 120px;
		background:
			repeating-linear-gradient(#ddd 0 4px, transparent 4px 8px) 0 100% / 1px 20px no-repeat,
			linear-gradient(#ddd, #ddd) 24px 100% / 1px 9px no-repeat,
			linear-gradient(#ddd, #ddd) 48px 100% / 1px 9px no-repeat,
			linear-gradient(#ddd, #ddd) 72px 100% / 1px 9px no-repeat,
			linear-gradient(#ddd, #ddd) 96px 100% / 1px 9px no-repeat;
	}

	.sec span {
		display: block;
		width: 24px;
		margin: 8px 0 0 -12px;
		font-size: 11px;
		font-weight: 500;
		text-align: center;
		color: #e0e0e0;
	}

	.track {
		height: 36px;
		margin-bottom: 2px;
		background: #252525;
	}

	.playhead {
		position: absolute;
		left: 618px;
		top: 27px;
	}

	.scroll {
		width: 8px;
		margin-top: 12px;
		border-radius: 4px 4px 0 0;
		background: #101011;
		box-shadow: 0 1px #fff;
	}

	.popover {
		position: absolute;
		left: 229px;
		top: 45px;
		box-sizing: border-box;
		width: 461px;
		padding: 16px 12px 12px;
		border-radius: 2px;
		background: #1d1e20;
		box-shadow: 0 4px 18px rgb(0 0 0 / 55%);
	}

	.pop-title {
		display: flex;
		align-items: center;
		gap: 8px;
		margin: 0 0 14px 8px;
	}

	.pop-row {
		display: flex;
		align-items: center;
		gap: 10px;
		height: 29px;
		margin-bottom: 10px;
	}

	.time {
		display: flex;
		box-sizing: border-box;
		width: 119px;
		height: 28px;
		border: 1px solid #434446;
		border-radius: 2px;
		background: #2a2b2e;
	}

	.time input {
		width: 88px;
		padding-left: 8px;
	}

	.time span {
		flex: 1;
		border-left: 1px solid #434446;
		line-height: 25px;
		text-align: center;
	}

	.pop-row .val {
		width: 260px;
		height: 29px;
		padding-left: 7px;
		border: 1px solid #434446;
		border-radius: 2px;
		background: #2a2b2e;
	}

	.pop-row .val.focus {
		border-color: #4088ff;
		box-shadow: 0 0 0 2px #1b2f57;
	}

	.pop-row button {
		margin-left: 7px;
	}

	.pop-foot {
		display: flex;
		justify-content: flex-end;
		gap: 8px;
		margin-top: 15px;
	}

	.pop-foot button {
		width: 48px;
		height: 22px;
		border-radius: 2px;
		line-height: 18px;
	}

	.pop-foot .cancel {
		width: 47px;
		border: 1px solid #434446;
	}

	.pop-foot .ok {
		background: #246dff;
		font-weight: 500;
		color: #fff;
	}

	.mark {
		position: absolute;
		left: 395px;
		top: 166px;
	}

	.note {
		position: absolute;
		left: 750px;
		top: 313px;
		font-size: 21px;
		font-weight: 300;
		line-height: 32px;
		color: #f8303f;
	}

	.zoombar {
		display: flex;
		grid-column: 1 / -1;
		align-items: center;
		justify-content: flex-end;
		gap: 14px;
		padding-top: 2px;
	}

	.zoombar button {
		display: flex;
	}

	.zoombar .percent {
		width: 60px;
		height: 26px;
		margin-right: 10px;
		padding-left: 8px;
		border: 1px solid #242528;
		border-radius: 2px;
		font-size: 12px;
		color: #4b4c4d;
	}

	.zoombar input[type='range'] {
		width: 100px;
		height: 14px;
		appearance: none;
	}

	input[type='range']::-webkit-slider-runnable-track {
		height: 4px;
		border-radius: 2px;
		background: linear-gradient(90deg, #264b5c, #21355f 24%, #27282a 24%);
	}

	input[type='range']::-webkit-slider-thumb {
		width: 12px;
		height: 12px;
		margin-top: -4px;
		border: 2px solid #57585a;
		border-radius: 50%;
		background: #20376e;
		appearance: none;
	}

	.zoombar .fit {
		align-items: center;
		justify-content: center;
		width: 43px;
		height: 28px;
		margin-left: -2px;
		padding-right: 6px;
		border-left: 1px solid #242528;
	}

	/* parameters */
	.params {
		box-sizing: border-box;
		width: 327px;
		border-left: 1px solid #000;
	}

	.params h2 {
		padding: 14px 10px 13px;
		border-bottom: 1px solid #303134;
	}

	.param-list {
		display: flex;
		flex-direction: column;
		gap: 10px;
		padding: 16px;
	}

	.card {
		display: grid;
		grid-template-columns: 60px 1fr;
		gap: 16px 10px;
		align-items: center;
		padding: 19px 12px 12px;
		border: 1px solid #2e2f32;
		border-radius: 2px;
		background: #2a2b2e;
		font-size: 12px;
	}

	.card .del {
		grid-column: 1 / -1;
		justify-self: end;
		height: 14px;
		margin: 0 7px -5px 0;
	}

	.card label {
		text-align: right;
		white-space: nowrap;
	}

	.card em {
		margin-right: 5px;
		font-style: normal;
		color: #f0404b;
	}

	.card input,
	.card select {
		width: 100%;
		height: 29px;
		padding: 0 7px;
		border: 1px solid #414244;
		border-radius: 2px;
		color: #555659;
		opacity: 1;
		appearance: none;
	}

	.card .num {
		height: 30px;
	}

	.card select {
		display: block;
		height: 28px;
	}

	.select {
		position: relative;
	}

	.select svg {
		position: absolute;
		right: 8px;
		top: 10px;
		fill: none;
		stroke: #5f6063;
	}

	.card .edit {
		grid-column: 1 / -1;
		height: 28px;
		border: 1px solid #c4c4c4;
		border-radius: 2px;
		font-size: 14px;
		line-height: 20px;
	}

	.param-list .add-param {
		display: flex;
		align-items: center;
		justify-content: center;
		gap: 6px;
		height: 32px;
		border: 1px dashed #c4c4c4;
		border-radius: 2px;
	}

	/* taskbar */
	.taskbar {
		display: flex;
		height: 40px;
		background: linear-gradient(90deg, #23353f, #1d3040 65%, #1b2a44);
	}

	.start {
		display: grid;
		place-items: center;
		width: 48px;
	}

	.search {
		display: flex;
		align-items: center;
		gap: 12px;
		box-sizing: border-box;
		width: 288px;
		padding-left: 11px;
		border: 1px solid #b9bcbe;
		background: #f2f2f2;
		color: #222;
	}

	.search input {
		flex: 1;
		min-width: 0;
	}

	.search input::placeholder {
		color: #333;
	}

	.task {
		display: grid;
		place-items: center;
		width: 40px;
		margin-right: 9px !important;
	}

	.task.view {
		width: 48px;
		margin-right: 3px !important;
	}

	.task.on {
		width: 48px;
		margin-right: 5px !important;
		background: #4b6067;
	}

	.task.run {
		box-shadow: inset 0 -2px #76b5ef;
	}

	.tray {
		display: flex;
		align-items: center;
		gap: 8px;
		margin-left: auto;
		padding-right: 4px;
		border-right: 1px solid #7b8494;
		margin-right: 4px;
		color: #fff;
	}

	.tray svg:first-child {
		margin-right: 2px;
	}

	.ime {
		margin-left: -3px;
		font-size: 16px;
		font-weight: 500;
	}

	.pin {
		width: 16px;
		height: 16px;
		margin-left: 5px;
		background: #fff;
		font-size: 14px;
		line-height: 16px;
		text-align: center;
		color: #111;
	}

	time {
		width: 78px;
		font-size: 12px;
		line-height: 19px;
		text-align: center;
	}

	.notice {
		margin: 4px 5px 0 3px !important;
	}
</style>
